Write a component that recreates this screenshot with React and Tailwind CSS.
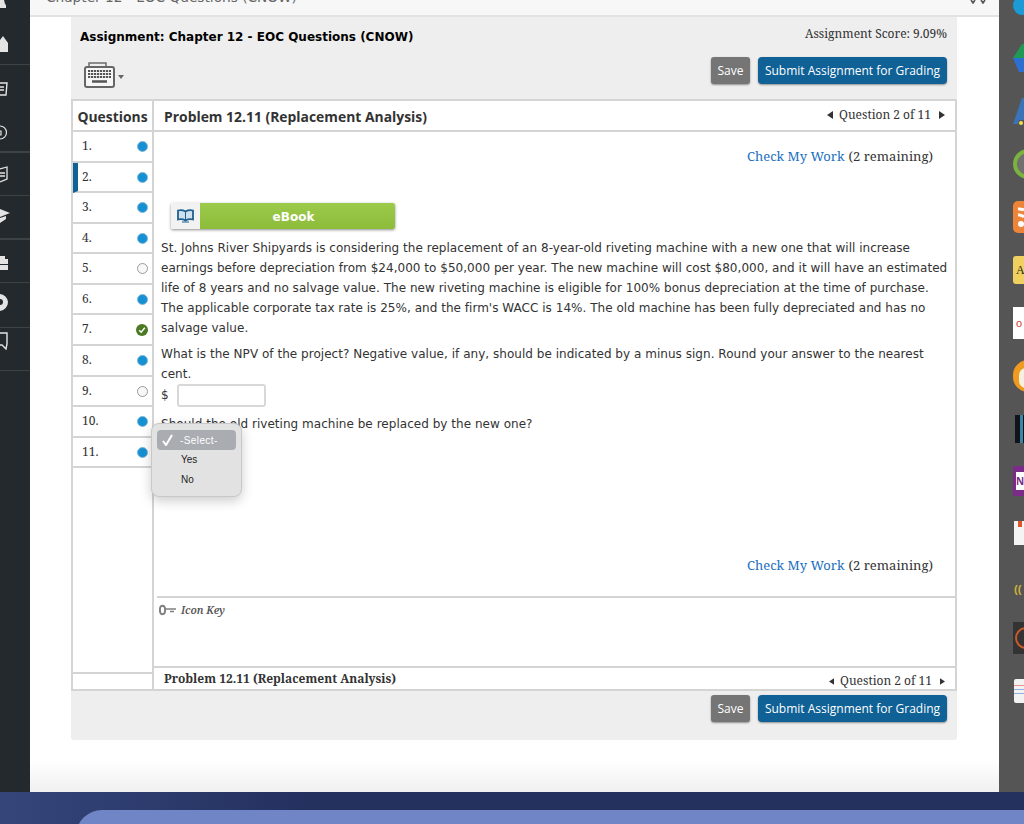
import React from "react";

const serif = "font-['Noto_Serif','DejaVu_Serif',serif]";
const rows = [
  ["1.", "b", 31], ["2.", "b", 30], ["3.", "b", 31], ["4.", "b", 30], ["5.", "o", 31], ["6.", "b", 30],
  ["7.", "c", 31], ["8.", "b", 31], ["9.", "o", 30], ["10.", "b", 31], ["11.", "b", 30],
];

function Dot({ kind }) {
  if (kind === "b") return <span className="h-[11px] w-[11px] rounded-full border border-[#7fb8d8] bg-[#1590d2]" />;
  if (kind === "o") return <span className="h-[11px] w-[11px] rounded-full border border-[#9a9a9a] bg-[#f8f8f8]" />;
  return (
    <span className="flex h-[12px] w-[12px] items-center justify-center rounded-full bg-[#4b7a22]">
      <svg width="8" height="8" viewBox="0 0 8 8"><path d="M1.2 4.2 3.2 6.2 6.8 1.8" fill="none" stroke="#fff" strokeWidth="1.5" /></svg>
    </span>
  );
}

function Keyboard() {
  return (
    <svg width="32" height="27" viewBox="0 0 32 27">
      <path d="M5 5V2h17v3" fill="none" stroke="#6b6b6b" strokeWidth="1.5" />
      <rect x="1" y="6" width="29" height="20" rx="2" fill="#f6f6f6" stroke="#666" strokeWidth="2" />
      <path d="M4 10h23M4 13h23M4 16h23" stroke="#555" strokeWidth="2.2" strokeDasharray="2.2 .8" />
      <path d="M8 20.5h15" stroke="#555" strokeWidth="2.5" />
    </svg>
  );
}

function Arrow({ dir, small }) {
  const cls = small ? "h-[7px] w-[5px]" : "h-[8px] w-[6px]";
  return (
    <svg viewBox="0 0 6 8" className={`mt-px ${cls} ${dir === "r" ? "ml-[2px]" : ""}`}>
      <path d={dir === "l" ? "M6 0v8L0 4z" : "M0 0v8l6-4z"} fill="#333" />
    </svg>
  );
}

function Pager({ small }) {
  return (
    <div className={`flex items-center gap-[6px] pr-[10px] text-[12px] leading-[18px] font-normal text-[#333] ${serif}`}>
      <Arrow dir="l" small={small} />
      <span>Question 2 of 11</span>
      <Arrow dir="r" small={small} />
    </div>
  );
}

function Buttons() {
  return (
    <div className="flex items-center justify-end gap-[8px] font-['Open_Sans',sans-serif] text-[12px] text-white">
      <span className="flex h-[27px] w-[39px] items-center justify-center rounded-[3px] bg-[#757575] shadow-[0_1px_2px_rgba(0,0,0,0.4)]">Save</span>
      <span className="flex h-[27px] w-[189px] items-center justify-center rounded-[4px] bg-[#0f6196] shadow-[0_1px_2px_rgba(0,0,0,0.4)]">Submit Assignment for Grading</span>
    </div>
  );
}

function Check() {
  return (
    <div className={`flex justify-end pr-[22px] text-[13px] text-[#333] ${serif}`}>
      <span className="text-[#1b6fc0]">Check My Work</span>
      <span className="ml-[4px]">(2 remaining)</span>
    </div>
  );
}

function Sidebar() {
  return (
    <aside className="relative z-10 w-[30px] shrink-0 overflow-hidden bg-[#24292d]">
      <div className="h-[65px] border-b border-[#3d4245]">
        <svg width="10" height="9" viewBox="0 0 10 9" className="block"><path d="M0 0h4l1 4 1 1 0 3H0z" fill="#e4e4e4" /></svg>
        <svg width="8" height="17" viewBox="0 0 8 17" className="mt-[26px] block"><path d="M0 5 3 1 8 8V17H0z" fill="#e4e4e4" /></svg>
      </div>
      <div className="h-[88px] border-b-2 border-[#3d4245] pt-[16px]">
        <svg width="8" height="16" viewBox="0 0 8 16" className="block"><path d="M0 2h7L6 14H0M0 6h4M0 9h4" fill="none" stroke="#e4e4e4" strokeWidth="1.4" /></svg>
        <svg width="8" height="15" viewBox="0 0 8 15" className="mt-[28px] block"><path d="M0 1a6.500 6.500 0 0 1 0 13M0 6h1v4H0" fill="none" stroke="#e4e4e4" strokeWidth="1.2" /></svg>
      </div>
      <div className="h-[43px] border-b border-[#3d4245] pt-[13px]">
        <svg width="8" height="17" viewBox="0 0 8 17" className="block"><path d="M0 3l7-2v12l-7 3M0 7h5M0 10h5" fill="none" stroke="#e4e4e4" strokeWidth="1.3" /></svg>
      </div>
      <div className="h-[44px] border-b-2 border-[#3d4245] pt-[13px]">
        <svg width="10" height="15" viewBox="0 0 10 15" className="block"><path d="M0 0l10 4-10 4zM0 9l6-2v3l-6 4z" fill="#e4e4e4" /></svg>
      </div>
      <div className="h-[43px] border-b border-[#3d4245] pt-[14px]">
        <svg width="8" height="17" viewBox="0 0 8 17" className="block"><path d="M0 2h5v3h3v5H0zM0 11h8v5H0z" fill="#e4e4e4" /></svg>
      </div>
      <div className="h-[45px] border-b border-[#3d4245] pt-[9px]">
        <svg width="8" height="21" viewBox="0 0 8 21" className="block"><path d="M0 2a9 9 0 0 1 8 8 9 9 0 0 1-8 9v-6a3 3 0 0 0 0-6z" fill="#e4e4e4" /></svg>
      </div>
      <div className="h-[43px] border-b border-[#3d4245] pt-[4px]">
        <svg width="8" height="18" viewBox="0 0 8 18" className="block"><path d="M0 1h7v11l-1 5-4-4H0" fill="none" stroke="#e4e4e4" strokeWidth="1.4" /></svg>
      </div>
    </aside>
  );
}

function Dock() {
  return (
    <aside className="relative w-[25px] shrink-0 overflow-hidden bg-[#555555]">
      <div className="absolute left-[14px] top-[-4px] h-[19px] w-[20px] rounded-full bg-[#1b9ad6]" />
      <svg className="absolute left-[14px] top-[44px]" width="11" height="28" viewBox="0 0 11 28"><path d="M0 14 9 0h2v14z" fill="#1e9a55" /><path d="M0 14l6 14h5V14z" fill="#2c6fd0" /></svg>
      <svg className="absolute left-[14px] top-[98px]" width="11" height="28" viewBox="0 0 11 28"><path d="M0 26 9 0h2v22H6l-1 4z" fill="#3a73b8" /><circle cx="8" cy="25" r="2" fill="#efe04a" /></svg>
      <div className="absolute left-[14px] top-[149px] h-[30px] w-[30px] rounded-full border-[4px] border-[#7cb33d] bg-[#707070]" />
      <svg className="absolute left-[14px] top-[201px]" width="11" height="32" viewBox="0 0 11 32">
        <rect width="22" height="32" rx="5" fill="#ee8438" />
        <path d="M5 8a12 12 0 0 1 6 1M5 14a7 7 0 0 1 6 2" fill="none" stroke="#fff" strokeWidth="3" />
        <circle cx="8" cy="23" r="3" fill="#fff" />
      </svg>
      <div className="absolute left-[14px] top-[256px] flex h-[28px] w-[20px] items-center rounded-[3px] bg-[#f0d060] pl-[3px] font-['Liberation_Serif',serif] text-[12px] text-[#222]">A</div>
      <div className="absolute left-[14px] top-[307px] flex h-[32px] w-[20px] items-center bg-white pl-[3px] font-['Liberation_Sans',sans-serif] text-[11px] text-[#d8402a]">o</div>
      <div className="absolute left-[14px] top-[360px] h-[32px] w-[30px] rounded-full bg-[#f09a20]">
        <div className="ml-[6px] mt-[8px] h-[20px] w-[14px] rounded-full bg-[#f6f0e0]" />
      </div>
      <div className="absolute left-[16px] top-[415px] h-[28px] w-[20px] bg-[#101418]">
        <div className="ml-[5px] h-full w-[3px] bg-[#3a86a8]" />
      </div>
      <div className="absolute left-[14px] top-[466px] flex h-[30px] w-[20px] items-center bg-[#7a2c88] pl-[3px]">
        <span className="flex h-[18px] w-[12px] items-center bg-white font-['Open_Sans',sans-serif] text-[10px] font-bold text-[#7a2c88]">N</span>
      </div>
      <div className="absolute left-[15px] top-[521px] h-[24px] w-[20px] bg-[#f4f4f4]">
        <div className="ml-[4px] h-[6px] w-[4px] bg-[#e0562a]" />
      </div>
      <div className="absolute left-[15px] top-[581px] font-['Liberation_Sans',sans-serif] text-[11px] font-bold text-[#cdb23a]">((</div>
      <div className="absolute left-[14px] top-[622px] flex h-[32px] w-[20px] items-center bg-[#333333] pl-[2px]">
        <span className="h-[22px] w-[22px] shrink-0 rounded-full border-2 border-[#c85a2a]" />
      </div>
      <div className="absolute left-[15px] top-[679px] h-[24px] w-[20px] rounded-[2px] bg-[#f2f2f2]">
        <div className="mt-[6px] h-px w-full bg-[#e89090]" />
        <div className="mt-[3px] h-px w-full bg-[#90b0e0]" />
        <div className="mt-[3px] h-px w-full bg-[#90b0e0]" />
      </div>
    </aside>
  );
}

export default function App() {
  return (
    <div className="relative flex h-[824px] w-[1024px] flex-col overflow-hidden bg-[#24305d] font-['DejaVu_Sans',sans-serif]">
      <div className="flex h-[792px] shrink-0">
        <Sidebar />
        <main className="flex h-full w-[969px] flex-col bg-[linear-gradient(to_bottom,#ffffff_96%,#f0f0f0)]">
          <div className="flex h-[17px] shrink-0 items-start justify-between overflow-hidden border-b-2 border-[#e2e2e2] bg-[#f7f7f7] pl-[16px] pr-[13px]">
            <div className="mt-[-13px] text-[13.700px] leading-[20px] text-[#666]">Chapter 12 - EOC Questions (CNOW)</div>
            <svg width="16" height="4" viewBox="0 0 16 4" className="block"><path d="M1 0l2 3 2-3M11 0l2 3 2-3" fill="none" stroke="#555" strokeWidth="1.600" /></svg>
          </div>
          <div className="ml-[41px] w-[886px] rounded-b-[3px] bg-[#eeeeee] pb-[18px]">
            <div className="flex h-[82px] flex-col pl-[9px] pr-[10px] pt-[8px]">
              <div className="flex items-start justify-between">
                <span className="mt-[2px] text-[12px] font-bold leading-[20px] text-black">Assignment: Chapter 12 - EOC Questions (CNOW)</span>
                <span className={`text-[12px] leading-[18px] text-[#333] ${serif}`}>Assignment Score: 9.09%</span>
              </div>
              <div className="flex items-start justify-between">
                <div className="ml-[4px] mt-[14px] flex items-center gap-[2px]">
                  <Keyboard />
                  <span className="mt-[5px] h-0 w-0 border-x-[3px] border-t-[4px] border-x-transparent border-t-[#666]" />
                </div>
                <div className="mt-[10px]"><Buttons /></div>
              </div>
            </div>

            <div className="relative flex h-[592px] border-2 border-[#d4d4d4] bg-white">
              <div className="flex w-[81px] shrink-0 flex-col border-r-2 border-[#d4d4d4]">
                <div className="flex h-[31px] shrink-0 items-center justify-center border-b-2 border-[#d4d4d4] pt-[3px] font-['Open_Sans',sans-serif] text-[13.900px] font-bold text-[#333]">Questions</div>
                {rows.map(([n, k, h], i) => (
                  <div key={n} style={{ height: h }} className={`flex shrink-0 items-center justify-between border-b-2 border-[#d4d4d4] pr-[4px] pl-[9px] text-[12px] text-[#333] ${serif} ${i === 1 ? "border-l-[5px] border-l-[#0f6196] !pl-[4px]" : ""}`}>
                    <span className="mb-px">{n}</span>
                    <Dot kind={k} />
                  </div>
                ))}
                <div className="flex-1" />
                <div className="h-[17px] shrink-0 border-t-2 border-[#d4d4d4]" />
              </div>

              <div className="relative flex min-w-0 flex-1 flex-col">
                <div className="flex h-[31px] shrink-0 items-center justify-between border-b-2 border-[#d4d4d4] pl-[10px] font-['Open_Sans',sans-serif] text-[13.900px] font-bold text-[#333]">
                  <span className="pt-[3px]">Problem 12.11 (Replacement Analysis)</span>
                  <div className="mb-[2px]"><Pager /></div>
                </div>

                <div className="shrink-0 pt-[15px]"><Check /></div>

                <div className="ml-[17px] mt-[36px] flex h-[26px] w-[224px] shrink-0 overflow-hidden rounded-[2px] shadow-[0_1px_3px_rgba(0,0,0,0.45)]">
                  <span className="flex w-[29px] items-center justify-center bg-[#f2f2f2]">
                    <svg width="17" height="14" viewBox="0 0 17 14"><path d="M8.500 2.500C6 1 3 1 1 1.500v9c2-.5 5-.5 7.500 1C11 10 14 10 16 10.500v-9c-2-.5-5-.5-7.500 1z" fill="#cfe0ee" stroke="#1f5f8f" strokeWidth="1.800" /><path d="M8.500 3v9M5 13h7" stroke="#1f5f8f" /></svg>
                  </span>
                  <span className="flex flex-1 items-center justify-center bg-[linear-gradient(to_bottom,#9ccb4b,#8dbb3a)] pr-[8px] pt-[3px] text-[12px] font-bold text-white">eBook</span>
                </div>

                <div className="ml-[7px] mt-[9px] w-[790px] shrink-0 text-[12px] leading-[20px] tracking-[0.03px] text-[#333]">
                  <p>St. Johns River Shipyards is considering the replacement of an 8-year-old riveting machine with a new one that will increase earnings before depreciation from $24,000 to $50,000 per year. The new machine will cost $80,000, and it will have an estimated life of 8 years and no salvage value. The new riveting machine is eligible for 100% bonus depreciation at the time of purchase. The applicable corporate tax rate is 25%, and the firm's WACC is 14%. The old machine has been fully depreciated and has no salvage value.</p>
                  <p className="mt-[6px]">What is the NPV of the project? Negative value, if any, should be indicated by a minus sign. Round your answer to the nearest cent.</p>
                  <div className="flex items-center gap-[8px]">
                    <span>$</span>
                    <span className="h-[23px] w-[89px] rounded-[3px] border-2 border-[#d8d8d8] bg-white" />
                  </div>
                  <p className="mt-[7px]">Should the old riveting machine be replaced by the new one?</p>
                </div>

                <div className="absolute left-[-3px] top-[322px] z-10 h-[74px] w-[91px] rounded-[8px] border border-[#c8c8c8] bg-[#e2e2e2] px-[5px] pt-[6px] font-['Liberation_Sans',sans-serif] text-[10px] text-[#222] shadow-[0_4px_12px_rgba(0,0,0,0.2)]">
                  <div className="flex h-[20px] items-center rounded-[4px] bg-[#a9adb2] pl-[5px] text-white">
                    <svg width="11" height="12" viewBox="0 0 11 12"><path d="M1 7 4 11 10 1" fill="none" stroke="#fff" strokeWidth="2" /></svg>
                    <span className="ml-[7px] tracking-[0.4px]">-Select-</span>
                  </div>
                  <div className="mt-[2px] pl-[24px] leading-[16px]">Yes</div>
                  <div className="mt-[4px] pl-[24px] leading-[16px]">No</div>
                </div>

                <div className="mt-[122px] shrink-0"><Check /></div>

                <div className="ml-[3px] mt-[21px] flex h-[70px] shrink-0 items-start gap-[4px] border-t-2 border-[#d4d4d4] pt-[5px]">
                  <svg width="18" height="12" viewBox="0 0 18 12" className="ml-[2px] mt-[1px]">
                    <ellipse cx="3.500" cy="6" rx="2.600" ry="4.200" fill="none" stroke="#808080" strokeWidth="2" />
                    <path d="M6 5h11M11 7.500h4" stroke="#808080" strokeWidth="1.500" />
                  </svg>
                  <span className={`text-[10.500px] font-semibold italic text-[#555] ${serif}`}>Icon Key</span>
                </div>

                <div className={`flex min-h-0 flex-1 items-start justify-between border-t-2 border-[#d4d4d4] pl-[10px] pt-[2px] text-[12px] leading-[18px] font-bold text-[#333] ${serif}`}>
                  <span>Problem 12.11 (Replacement Analysis)</span>
                  <div className="mt-[2px]"><Pager small /></div>
                </div>
              </div>
            </div>

            <div className="pl-[9px] pr-[10px] pt-[4px]"><Buttons /></div>
          </div>
        </main>
        <Dock />
      </div>
      <div className="flex-1 bg-[linear-gradient(to_right,#35457a,#24315f_30%)] pt-[18px] pl-[76px]">
        <div className="h-[40px] rounded-tl-[26px] bg-[#7085c6]" />
      </div>
    </div>
  );
}
